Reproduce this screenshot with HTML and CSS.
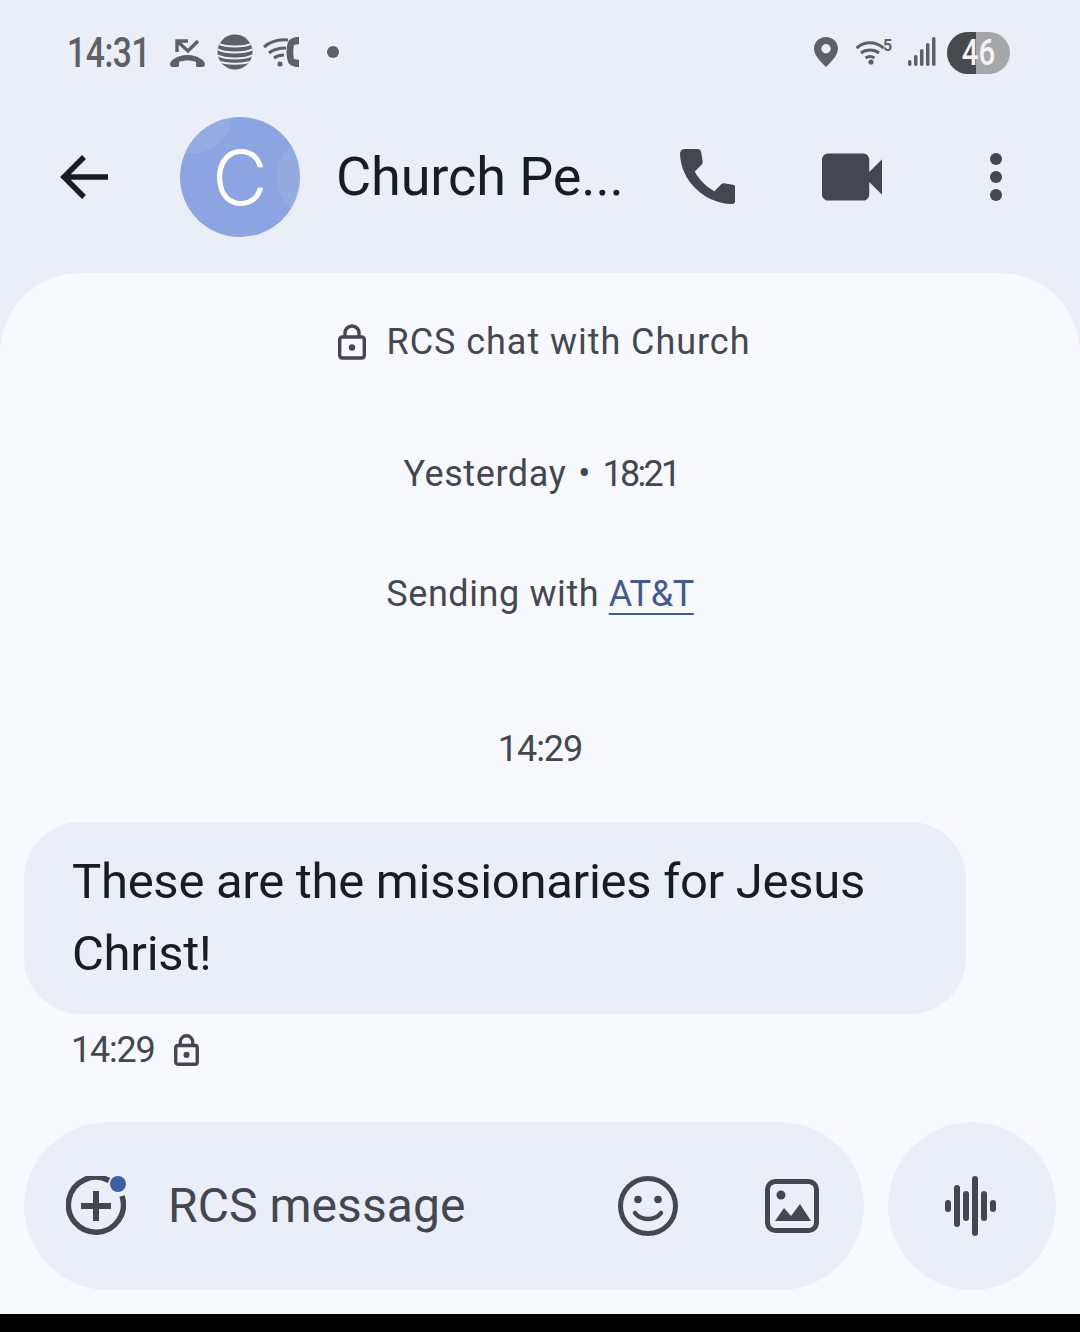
FILE: index.html
```html
<!DOCTYPE html>
<html lang="en">
<head>
<meta charset="utf-8">
<title>Church Pe...</title>
<link rel="stylesheet" href="styles.css">
</head>
<body>
<div class="screen">
  <div class="status">
    <div class="status-group">
      <span class="clock">14:31</span>
      <svg class="s-missed" viewBox="0 0 36 32"><path d="M18 5H7v11M7 5l11 10L28 5" fill="none" stroke="#5f6065" stroke-width="3.4"/><path d="M0 28c0-3 7-9 17.500-9S35 25 35 28c0 2-1 3-3 3h-4c-2 0-2-1-2-2v-3c-5-2-12-2-17 0v3c0 1 0 2-2 2H3c-2 0-3-1-3-3z" fill="#5f6065"/></svg>
      <svg class="s-att" viewBox="0 0 36 36"><defs><clipPath id="globe"><circle cx="18" cy="18" r="17.500"/></clipPath></defs><circle cx="18" cy="18" r="17.500" fill="#5f6065"/><g clip-path="url(#globe)" fill="none" stroke="#e9edf5" stroke-width="2"><path d="M-2 8c10 6 30 6 40 0M-2 14c10 6 30 6 40 0M-2 20c10 6 30 6 40 0M-2 26c10 5 30 5 40 0"/></g></svg>
      <svg class="s-wcall" viewBox="0 0 38 32"><path d="M1 11C8 5 16 3 25 4M6 17c5-4 11-5 17-5M11 22c3-2 6-3 10-3" fill="none" stroke="#5f6065" stroke-width="3.2"/><circle cx="17" cy="28" r="2.600" fill="#5f6065"/><path d="M36 1c-5 0-10 2-11 5-2 6-2 14 0 20 1 3 6 5 11 5v-7l-5-1c-1-4-1-10 0-14l5-1z" fill="#5f6065"/></svg>
      <span class="s-dot"></span>
    </div>
    <div class="status-group right">
      <svg class="s-pin" viewBox="0 0 24 30"><path fill-rule="evenodd" d="M12 0c6.600 0 12 5 12 11.500C24 18 18 24 12 30 6 24 0 18 0 11.500 0 5 5.400 0 12 0zm0 7a4.700 4.700 0 1 0 0 9.400A4.700 4.700 0 0 0 12 7z" fill="#5f6065"/></svg>
      <div class="s-wifi">
        <svg viewBox="0 0 38 28"><path d="M.5 8c8-7 19-7 27 0M5 13c5-4 13-4 18 0M9.500 18c3-2 6-2 9 0" fill="none" stroke="#5f6065" stroke-width="3"/><circle cx="15" cy="22" r="2.600" fill="#5f6065"/></svg>
        <span class="s-five">5</span>
      </div>
      <svg class="s-signal" viewBox="0 0 28 30"><g fill="#5f6065"><rect x="0" y="23" width="3.500" height="6" rx="1.700"/><rect x="6" y="18" width="3.500" height="11" rx="1.700"/><rect x="12" y="12" width="3.500" height="17" rx="1.700"/><rect x="18" y="6" width="3.500" height="23" rx="1.700"/><rect x="24" y="0" width="3.500" height="29" rx="1.700"/></g></svg>
      <div class="battery"><span class="battery-fill"></span><span class="battery-level">46</span></div>
    </div>
  </div>

  <header class="topbar">
    <svg class="i-back" viewBox="0 0 50 48"><path d="M48 24H5M24 4 4 24l20 20" fill="none" stroke="#191c20" stroke-width="5.500"/></svg>
    <div class="avatar"><span>C</span></div>
    <h1 class="title">Church Pe...</h1>
    <svg class="i-phone" viewBox="0 0 56 56"><path d="M5 0h13c2 0 3 1 3.500 3l1.500 9c.2 1.500 0 3-1 4l-7 7c5 9 11 15 20 20l7-7c1-1 2.500-1.300 4-1l8 1.500c2 .4 2.500 1.500 2.500 3.500v12c0 2-1 4-4 4C24 55 1 32 0 5c0-3 2-5 5-5z" fill="#44474f"/></svg>
    <svg class="i-video" viewBox="0 0 62 50"><path d="M6 1h36c3 0 6 3 6 6v13l13-13v36L48 30v13c0 3-3 6-6 6H6c-3 0-6-3-6-6V7c0-3 3-6 6-6z" fill="#44474f"/></svg>
    <svg class="i-more" viewBox="0 0 12 48"><g fill="#44474f"><circle cx="6" cy="6" r="6"/><circle cx="6" cy="24" r="6"/><circle cx="6" cy="42" r="6"/></g></svg>
  </header>

  <main class="panel">
    <div class="chat-note">
      <svg class="i-lock" viewBox="0 0 28 36"><path d="M7 13V9a7 7 0 0 1 14 0v4" fill="none" stroke="#44474f" stroke-width="3.400"/><rect x="1.700" y="13" width="24.600" height="21" rx="2.500" fill="none" stroke="#44474f" stroke-width="3.400"/><circle cx="14" cy="23.500" r="3.200" fill="#44474f"/></svg>
      <span>RCS chat with Church</span>
    </div>
    <div class="when"><span class="when-day">Yesterday</span><span class="when-sep">•</span><span class="when-time">18:21</span></div>
    <div class="sending">Sending with <a href="#" class="link">AT&amp;T</a></div>
    <div class="time">14:29</div>
    <div class="bubble">These are the missionaries for Jesus Christ!</div>
    <div class="meta">
      <span class="meta-time">14:29</span>
      <svg class="i-lock-small" viewBox="0 0 28 36"><path d="M7 13V9a7 7 0 0 1 14 0v4" fill="none" stroke="#44474f" stroke-width="3.800"/><rect x="1.900" y="13" width="24.200" height="21" rx="2.500" fill="none" stroke="#44474f" stroke-width="3.800"/><circle cx="14" cy="23.500" r="3.400" fill="#44474f"/></svg>
    </div>
    <div class="composer">
      <div class="field">
        <div class="plus">
          <svg viewBox="0 0 60 60"><path d="M43 4.500A27.500 27.500 0 1 0 56 20" fill="none" stroke="#44474f" stroke-width="5.500"/><path d="M30 15v30M15 30h30" stroke="#44474f" stroke-width="6" fill="none"/></svg>
          <span class="plus-dot"></span>
        </div>
        <span class="placeholder">RCS message</span>
        <svg class="i-emoji" viewBox="0 0 60 60"><circle cx="30" cy="30" r="27.500" fill="none" stroke="#44474f" stroke-width="5"/><circle cx="20" cy="23.500" r="3.800" fill="#44474f"/><circle cx="40" cy="23.500" r="3.800" fill="#44474f"/><path d="M17 37c6 8 20 8 26 0" fill="none" stroke="#44474f" stroke-width="4.500" stroke-linecap="round"/></svg>
        <svg class="i-image" viewBox="0 0 54 54"><rect x="2.500" y="2.500" width="49" height="49" rx="8" fill="none" stroke="#44474f" stroke-width="5"/><circle cx="16" cy="16" r="4.500" fill="#44474f"/><path d="M10 42l9-13 7 8 9-12 11 17z" fill="#44474f"/></svg>
      </div>
      <div class="voice">
        <svg viewBox="0 0 52 60"><g fill="#44474f"><rect x="0" y="24" width="6" height="12" rx="3"/><rect x="9" y="9" width="6" height="42" rx="3"/><rect x="18" y="15" width="6" height="30" rx="3"/><rect x="27" y="0" width="6" height="60" rx="3"/><rect x="36" y="15" width="6" height="30" rx="3"/><rect x="45" y="24" width="6" height="12" rx="3"/></g></svg>
      </div>
    </div>
  </main>
  <div class="navbar"></div>
</div>
</body>
</html>
```

FILE: styles.css
```css
* { box-sizing: border-box; }
html, body { margin: 0; padding: 0; }
body { background: #000; font-family: Roboto, "Open Sans", "Liberation Sans", sans-serif; }
.screen { width: 1080px; height: 1332px; display: flex; flex-direction: column; background: #eaeef6; overflow: hidden; }

.status { height: 105px; padding: 29px 70px 0 67px; display: flex; justify-content: space-between; align-items: flex-start; flex: none; }
.status-group { display: flex; align-items: center; height: 46px; }
.clock { font-family: Roboto, sans-serif; font-size: 42px; font-weight: 500; color: #5f6065; width: 103px; letter-spacing: -.5px; transform: scaleX(.8); transform-origin: left center; white-space: nowrap; }
.s-missed { width: 36px; height: 32px; }
.s-att { width: 36px; height: 36px; margin-left: 11px; }
.s-wcall { width: 38px; height: 32px; margin-left: 10px; }
.s-dot { width: 12px; height: 12px; border-radius: 50%; background: #5f6065; margin-left: 26px; }
.s-pin { width: 24px; height: 30px; margin-left: 1px; }
.s-wifi { position: relative; width: 38px; height: 28px; margin-left: 18px; margin-top: 4px; }
.s-wifi svg { display: block; width: 38px; height: 28px; }
.s-five { position: absolute; left: 27px; top: -2px; font: 700 16px/16px Roboto, sans-serif; color: #5f6065; }
.s-signal { width: 28px; height: 30px; margin-left: 14px; }
.battery { position: relative; width: 63px; height: 42px; border-radius: 21px; background: #a6a7ab; margin-left: 11px; margin-top: 2px; display: flex; align-items: center; justify-content: center; }
.battery-fill { position: absolute; left: 0; top: 0; bottom: 0; width: 29px; background: #48494d; border-radius: 21px 0 0 21px; }
.battery-level { position: relative; font: 500 36px/42px Roboto, sans-serif; color: #f3f3f5; transform: scaleX(.82); }

.topbar { height: 168px; flex: none; display: flex; align-items: center; padding: 0 78px 25px 60px; }
.i-back { width: 50px; height: 48px; flex: none; }
.avatar { width: 120px; height: 120px; border-radius: 50%; margin-left: 70px; flex: none; display: flex; align-items: center; justify-content: center; color: #fff; font-family: Inter, Roboto, sans-serif; font-size: 76px; font-weight: 300; line-height: 1;
  background: radial-gradient(circle at 12px -4px, #95abe3 40px, transparent 40.5px), radial-gradient(circle at 137px 60px, #93aae3 40px, transparent 40.5px), #8ca4e2; }
.title { margin: 0 0 0 36px; font-size: 54px; font-weight: 400; color: #191c20; letter-spacing: -.1px; white-space: nowrap; width: 344px; flex: none; }
.i-phone { width: 55px; height: 55px; flex: none; }
.i-video { width: 61px; height: 50px; flex: none; margin-left: 87px; }
.i-more { width: 12px; height: 48px; flex: none; margin-left: 107px; }

.panel { flex: 1; background: #f8f9ff; border-radius: 80px 80px 0 0; padding: 0 24px 24px; display: flex; flex-direction: column; color: #44474f; font-size: 36px; }
.chat-note { display: flex; justify-content: center; align-items: center; gap: 21px; margin-top: 47px; height: 44px; padding-left: 8px; letter-spacing: .95px; }
.i-lock { width: 28px; height: 36px; }
.when { display: flex; justify-content: center; margin-top: 88px; height: 44px; line-height: 44px; padding-left: 2px; }
.when-day { letter-spacing: .6px; }
.when-sep { margin: 0 12px; }
.when-time { letter-spacing: -2.700px; }
.sending { text-align: center; margin-top: 76px; height: 44px; line-height: 44px; letter-spacing: .6px; }
.link { color: #3f5b8f; letter-spacing: -.4px; text-decoration: underline; text-underline-offset: 7px; text-decoration-thickness: 2px; }
.time { text-align: center; margin-top: 111px; height: 44px; line-height: 44px; letter-spacing: -1px; }
.bubble { width: 942px; height: 192px; margin-top: 51px; background: #eaeef6; border-radius: 56px; padding: 24px 48px; color: #191c20; font-size: 49px; letter-spacing: -.28px; line-height: 72px; }
.meta { display: flex; align-items: center; gap: 19px; margin: 14px 0 0 47px; height: 44px; }
.meta-time { letter-spacing: -1.200px; }
.i-lock-small { width: 25px; height: 32px; }
.composer { margin-top: auto; display: flex; gap: 24px; }
.field { width: 840px; height: 168px; border-radius: 84px; background: #eaeef6; display: flex; align-items: center; padding-left: 42px; }
.plus { position: relative; width: 60px; height: 60px; flex: none; }
.plus svg { display: block; width: 60px; height: 60px; }
.plus-dot { position: absolute; right: 0; top: 0; width: 16px; height: 16px; border-radius: 50%; background: #3f5ea6; }
.placeholder { font-size: 48px; letter-spacing: .05px; margin: -2px 0 0 42px; width: 450px; flex: none; }
.i-emoji { width: 60px; height: 60px; flex: none; }
.i-image { width: 54px; height: 54px; flex: none; margin-left: 87px; }
.voice { width: 168px; height: 168px; border-radius: 50%; background: #eaeef6; display: flex; align-items: center; justify-content: center; padding-right: 2px; }
.voice svg { width: 52px; height: 60px; }
.navbar { height: 18px; flex: none; background: #000; }
```
